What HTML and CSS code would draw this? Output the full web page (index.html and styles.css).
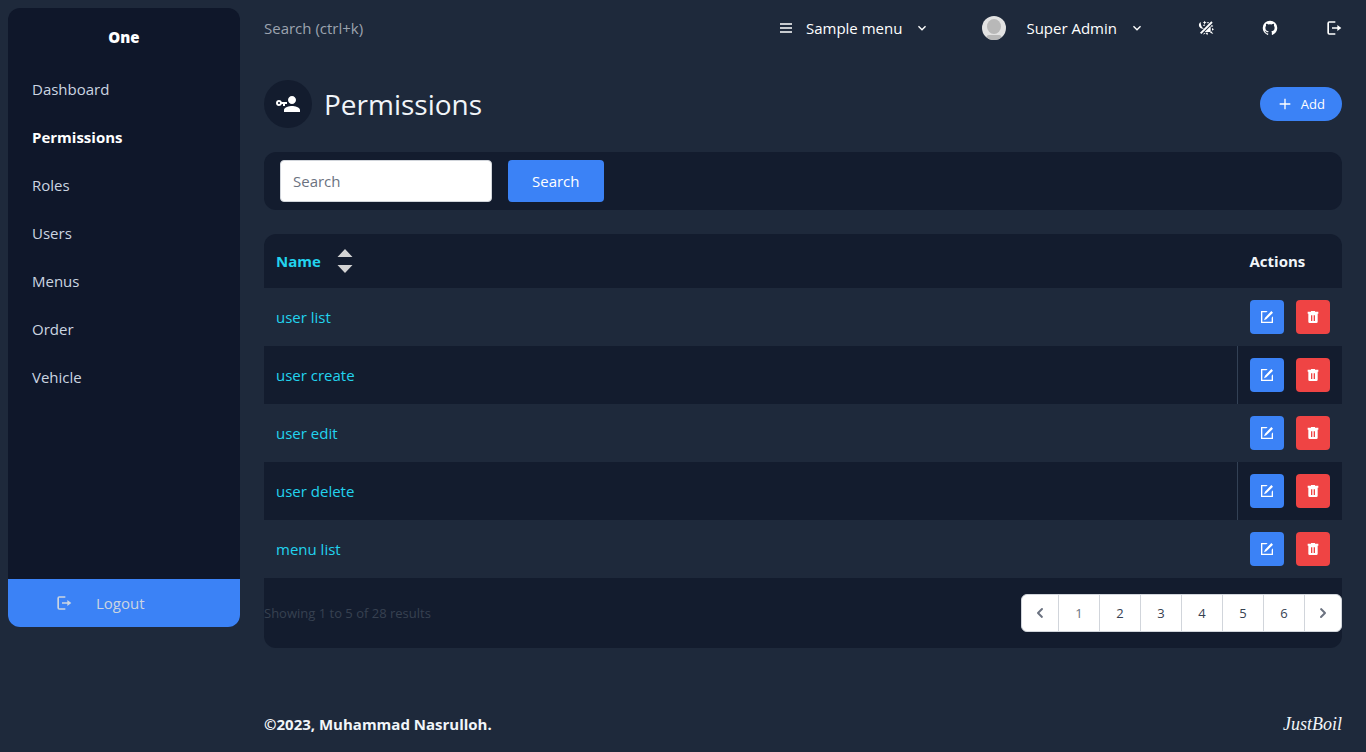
FILE: index.html
```html
<!DOCTYPE html>
<html lang="en">
<head>
<meta charset="utf-8">
<meta name="viewport" content="width=device-width, initial-scale=1">
<title>Permissions - One</title>
<link rel="stylesheet" href="styles.css">
</head>
<body>
<svg class="sprite" aria-hidden="true">
  <symbol id="exit" viewBox="0 0 24 24"><path d="M5 2h9v2H4.500v16H14v2H5q-3 0-3-3V5q0-3 3-3ZM9 10.800h8V7.500l6 4.500-6 4.500v-3.300H9Z"/></symbol>
  <symbol id="down" viewBox="0 0 24 24"><path d="M7.410 8.580 12 13.170l4.590-4.590L18 10l-6 6-6-6 1.410-1.420Z"/></symbol>
  <symbol id="edit" viewBox="0 0 24 24"><path d="M3 3h10l-2 2H5v14h14v-6l2-2v10H3V3ZM18.500 3l2.500 2.500L11 15.500 7.500 17 9 13Z"/></symbol>
  <symbol id="trash" viewBox="0 0 24 24"><path fill-rule="evenodd" d="M9 3h6v1h5v3H4V4h5ZM5 7h14v12q0 2-2 2H7q-2 0-2-2V7Zm4 2.500v8.500h2V9.500H9Zm4 0v8.500h2V9.500h-2Z"/></symbol>
</svg>
<div class="layout">
  <aside class="sidebar">
    <div class="brand">One</div>
    <nav class="side-nav" aria-label="Main">
      <a href="#">Dashboard</a>
      <a href="#" class="active" aria-current="page">Permissions</a>
      <a href="#">Roles</a>
      <a href="#">Users</a>
      <a href="#">Menus</a>
      <a href="#">Order</a>
      <a href="#">Vehicle</a>
    </nav>
    <a href="#" class="side-logout"><svg class="icon" aria-hidden="true"><use href="#exit"/></svg><span>Logout</span></a>
  </aside>
  <div class="page">
    <header class="topbar">
      <input class="quick-search" type="text" placeholder="Search (ctrl+k)" aria-label="Quick search">
      <nav class="top-nav" aria-label="Account">
        <a href="#" class="top-link"><svg class="icon" viewBox="0 0 24 24" aria-hidden="true"><path d="M3 5h18v2H3ZM3 11h18v2H3ZM3 17h18v2H3Z"/></svg><span>Sample menu</span><svg class="icon" aria-hidden="true"><use href="#down"/></svg></a>
        <a href="#" class="top-link user"><svg class="avatar" viewBox="0 0 24 24" aria-hidden="true"><defs><clipPath id="round"><circle cx="12" cy="12" r="12"/></clipPath></defs><g clip-path="url(#round)"><path fill="#e2e2e2" d="M0 0h24v24H0z"/><ellipse cx="12" cy="10.500" rx="7" ry="7.400" fill="#b8b8b8"/><path fill="#b8b8b8" d="M4 24q0-5 3-5h10q3 0 3 5Z"/></g></svg><span>Super Admin</span><svg class="icon" aria-hidden="true"><use href="#down"/></svg></a>
        <a href="#" class="top-icon" aria-label="Light or dark"><svg class="icon" viewBox="0 0 24 24" aria-hidden="true"><path d="M20 2 22 4 5 21 3 19ZM4 3Q0 6 2 10q2 4 7 3-5-2-5-10ZM10 1l1 2 2 .5-2 1L10 7 9 4.500 7 3.500 9 3ZM14 3h2v2h-2ZM8 7h2v2H8ZM19 9v9h-9l9-9ZM20 7l3 2-3 2ZM21 12l3 2-3 2ZM20 17l3 4-5-2ZM15 19l-1 4-3-4ZM9 19l-1 3 3-2Z"/></svg></a>
        <a href="#" class="top-icon" aria-label="GitHub"><svg class="icon" viewBox="1 1 22 22" aria-hidden="true"><path d="M12 2A10 10 0 0 0 2 12c0 4.420 2.870 8.170 6.840 9.500.5.080.66-.23.66-.5v-1.690c-2.770.6-3.360-1.340-3.360-1.340-.46-1.160-1.110-1.470-1.110-1.470-.91-.62.070-.6.070-.6 1 .070 1.530 1.030 1.530 1.030.87 1.520 2.340 1.070 2.910.83.090-.65.350-1.090.63-1.340-2.220-.25-4.550-1.110-4.550-4.920 0-1.110.38-2 1.030-2.710-.1-.25-.45-1.290.1-2.640 0 0 .84-.27 2.750 1.020a9.560 9.560 0 0 1 5 0c1.910-1.290 2.750-1.020 2.750-1.020.55 1.350.2 2.390.1 2.640.65.710 1.030 1.600 1.030 2.710 0 3.820-2.340 4.660-4.570 4.910.36.310.69.920.69 1.850V21c0 .27.160.59.670.5C19.140 20.160 22 16.420 22 12A10 10 0 0 0 12 2Z"/></svg></a>
        <a href="#" class="top-icon last" aria-label="Log out"><svg class="icon" aria-hidden="true"><use href="#exit"/></svg></a>
      </nav>
    </header>
    <main class="content">
      <div class="title-row">
        <div class="title">
          <span class="title-icon"><svg viewBox="0 0 24 24" aria-hidden="true"><path d="M11 10v2H9v2H7v-2H5.800c-.4 1.200-1.500 2-2.800 2-1.700 0-3-1.300-3-3s1.300-3 3-3c1.300 0 2.400.8 2.800 2H11m-8 0c-.6 0-1 .4-1 1s.4 1 1 1 1-.4 1-1-.4-1-1-1m13 4c2.700 0 8 1.300 8 4v2H8v-2c0-2.700 5.300-4 8-4m0-2c-2.200 0-4-1.800-4-4s1.800-4 4-4 4 1.800 4 4-1.800 4-4 4Z"/></svg></span>
          <h1>Permissions</h1>
        </div>
        <a href="#" class="add"><svg class="icon" viewBox="0 0 24 24" aria-hidden="true"><path d="M20 13h-7v7h-2v-7H4v-2h7V4h2v7h7v2Z"/></svg><span>Add</span></a>
      </div>
      <form class="filter">
        <input type="text" placeholder="Search" aria-label="Search permissions">
        <button type="button">Search</button>
      </form>
      <section class="card">
        <table>
          <thead><tr><th><a href="#" class="sort">Name <svg viewBox="0 0 16 24" aria-hidden="true"><path d="M8 0 15.500 8H.5ZM8 24 .5 16h15Z"/></svg></a></th><th class="actions-head">Actions</th></tr></thead>
          <tbody>
            <tr><td><a href="#">user list</a></td><td><div class="actions"><a href="#" class="edit" aria-label="Edit"><svg class="icon"><use href="#edit"/></svg></a><button class="delete" type="button" aria-label="Delete"><svg class="icon"><use href="#trash"/></svg></button></div></td></tr>
            <tr><td><a href="#">user create</a></td><td><div class="actions"><a href="#" class="edit" aria-label="Edit"><svg class="icon"><use href="#edit"/></svg></a><button class="delete" type="button" aria-label="Delete"><svg class="icon"><use href="#trash"/></svg></button></div></td></tr>
            <tr><td><a href="#">user edit</a></td><td><div class="actions"><a href="#" class="edit" aria-label="Edit"><svg class="icon"><use href="#edit"/></svg></a><button class="delete" type="button" aria-label="Delete"><svg class="icon"><use href="#trash"/></svg></button></div></td></tr>
            <tr><td><a href="#">user delete</a></td><td><div class="actions"><a href="#" class="edit" aria-label="Edit"><svg class="icon"><use href="#edit"/></svg></a><button class="delete" type="button" aria-label="Delete"><svg class="icon"><use href="#trash"/></svg></button></div></td></tr>
            <tr><td><a href="#">menu list</a></td><td><div class="actions"><a href="#" class="edit" aria-label="Edit"><svg class="icon"><use href="#edit"/></svg></a><button class="delete" type="button" aria-label="Delete"><svg class="icon"><use href="#trash"/></svg></button></div></td></tr>
          </tbody>
        </table>
        <div class="card-foot">
          <p>Showing 1 to 5 of 28 results</p>
          <nav class="pager" aria-label="Pagination">
            <a href="#" class="step" aria-label="Previous"><svg viewBox="0 0 20 20"><path d="M12.700 5.300a1 1 0 0 1 0 1.400L9.400 10l3.300 3.300a1 1 0 0 1-1.400 1.400l-4-4a1 1 0 0 1 0-1.400l4-4a1 1 0 0 1 1.400 0Z"/></svg></a>
            <a href="#" class="current" aria-current="page">1</a><a href="#">2</a><a href="#">3</a><a href="#">4</a><a href="#">5</a><a href="#">6</a>
            <a href="#" class="step" aria-label="Next"><svg viewBox="0 0 20 20"><path d="M7.300 14.700a1 1 0 0 1 0-1.400l3.300-3.300-3.300-3.300a1 1 0 0 1 1.400-1.400l4 4a1 1 0 0 1 0 1.400l-4 4a1 1 0 0 1-1.400 0Z"/></svg></a>
          </nav>
        </div>
      </section>
    </main>
    <footer class="footer"><b>©2023, Muhammad Nasrulloh.</b><a href="#" class="maker">JustBoil</a></footer>
  </div>
</div>
</body>
</html>
```
FILE: styles.css
```css
* { box-sizing: border-box; }
body {
  margin: 0;
  background: #1e293b;
  color: #f1f5f9;
  font: 15px/24px "Open Sans", "Noto Sans", sans-serif;
}
a { color: inherit; text-decoration: none; }
svg { display: block; fill: currentColor; flex: none; }
button, input { font: inherit; border: 0; margin: 0; }
.sprite { position: absolute; width: 0; height: 0; }
.icon { width: 16px; height: 16px; }

.layout { display: flex; align-items: flex-start; min-height: 100vh; }
.sidebar {
  display: flex;
  flex-direction: column;
  flex: none;
  width: 232px;
  min-height: calc(100vh - 133px);
  margin: 8px 0 0 8px;
  border-radius: 12px;
  overflow: hidden;
  background: #0f172a;
}
.brand { padding: 17px 0 16px; text-align: center; font-weight: 800; color: #fff; }
.side-nav { display: flex; flex-direction: column; flex: 1; color: #cbd5e1; }
.side-nav a { padding: 12px 24px; }
.side-nav .active { color: #fff; font-weight: 700; }
.side-logout {
  display: flex;
  align-items: center;
  gap: 24px;
  padding: 12px 48px;
  background: #3b82f6;
  color: #cbd5e1;
}

.page { flex: 1; min-width: 0; padding: 0 24px; }
.topbar { display: flex; justify-content: space-between; align-items: center; height: 56px; }
.quick-search { width: 200px; padding: 0; background: transparent; color: #fff; }
.quick-search::placeholder { color: #9ca3af; opacity: 1; }
.top-nav { display: flex; align-items: center; color: #fff; }
.top-link { display: flex; align-items: center; gap: 12px; }
.user { margin-left: 52px; }
.avatar { width: 24px; height: 24px; margin-right: 8px; }
.top-icon { margin-left: 48px; }
.user + .top-icon { margin-left: 53px; }

.title-row { display: flex; justify-content: space-between; align-items: center; margin: 24px 0; }
.title { display: flex; align-items: center; gap: 12px; }
.title-icon {
  display: grid;
  place-items: center;
  width: 48px;
  height: 48px;
  border-radius: 50%;
  background: #131c2e;
  color: #fff;
}
.title-icon svg { width: 24px; height: 24px; }
h1 { margin: 0; font-size: 28px; line-height: 36px; font-weight: 400; }
.add {
  display: flex;
  align-items: center;
  gap: 8px;
  padding: 5px 17px;
  border-radius: 17px;
  background: #3b82f6;
  color: #fff;
  font-size: 13px;
}
.filter {
  display: flex;
  gap: 16px;
  margin-bottom: 24px;
  padding: 8px 16px;
  border-radius: 12px;
  background: #131c2e;
}
.filter input {
  width: 212px;
  height: 42px;
  padding: 8px 12px;
  border: 1px solid #d1d5db;
  border-radius: 4px;
  background: #fff;
}
.filter input::placeholder { color: #6b7280; opacity: 1; }
.filter button { padding: 8px 24px; border-radius: 4px; background: #3b82f6; color: #fff; }

.card { border-radius: 12px; overflow: hidden; background: #131c2e; }
table { width: 100%; border-collapse: collapse; }
th { height: 54px; padding: 0 12px; text-align: left; font-weight: 700; }
.actions-head { width: 104px; }
.sort { display: flex; align-items: center; gap: 16px; color: #22d3ee; }
.sort svg { width: 16px; height: 24px; color: #d3d3d3; }
td { height: 58px; padding: 12px; }
td > a { color: #22d3ee; }
tbody tr:nth-child(odd) { background: #1e293b; }
tbody tr:nth-child(even) td:last-child { border-left: 1px solid #334155; }
.actions { display: flex; justify-content: flex-end; gap: 12px; }
.edit, .delete {
  display: grid;
  place-items: center;
  width: 34px;
  height: 34px;
  padding: 0;
  border-radius: 4px;
  background: #3b82f6;
  color: #fff;
}
.delete { background: #ef4444; }
.card-foot { display: flex; justify-content: space-between; align-items: center; padding: 16px 0; }
.card-foot p { margin: 0; font-size: 13px; color: #374151; }
.pager {
  display: flex;
  border: 1px solid #d1d5db;
  border-radius: 6px;
  overflow: hidden;
  background: #fff;
  color: #374151;
  font-size: 13px;
}
.pager a { display: grid; place-items: center; width: 41px; height: 36px; border-right: 1px solid #d1d5db; }
.pager .step { width: 37px; color: #6b7280; }
.pager a:last-child { width: 36px; border-right: 0; }
.pager .current { color: #6b7280; }
.pager svg { width: 20px; height: 20px; }

.footer { display: flex; justify-content: space-between; align-items: center; padding: 56px 0 8px; }
.footer b { font-weight: 700; }
.maker { font: italic 18px/40px "Liberation Serif", serif; }
```
